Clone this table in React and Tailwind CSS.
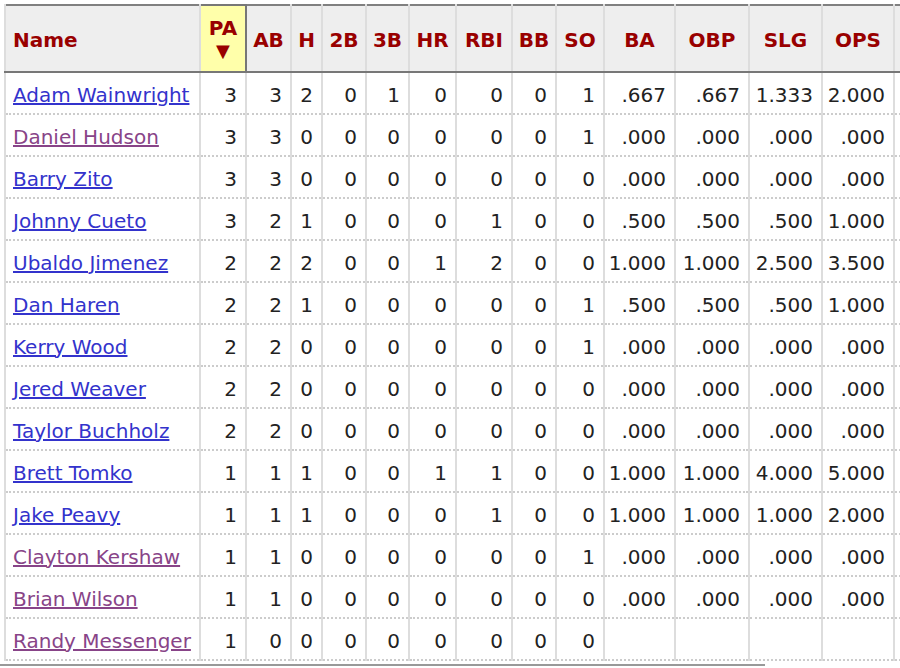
const COLS = [
  { key: 'name', label: 'Name', w: 195 },
  { key: 'pa', label: 'PA', w: 46 },
  { key: 'ab', label: 'AB', w: 45 },
  { key: 'h', label: 'H', w: 31 },
  { key: 'b2', label: '2B', w: 44 },
  { key: 'b3', label: '3B', w: 43 },
  { key: 'hr', label: 'HR', w: 47 },
  { key: 'rbi', label: 'RBI', w: 56 },
  { key: 'bb', label: 'BB', w: 44 },
  { key: 'so', label: 'SO', w: 48 },
  { key: 'ba', label: 'BA', w: 71 },
  { key: 'obp', label: 'OBP', w: 74 },
  { key: 'slg', label: 'SLG', w: 73 },
  { key: 'ops', label: 'OPS', w: 72 },
  { key: 'x', label: '', w: 60 },
]

// name, visited, PA AB H 2B 3B HR RBI BB SO, BA OBP SLG OPS
const ROWS = [
  ['Adam Wainwright', false, 3, 3, 2, 0, 1, 0, 0, 0, 1, '.667', '.667', '1.333', '2.000'],
  ['Daniel Hudson', true, 3, 3, 0, 0, 0, 0, 0, 0, 1, '.000', '.000', '.000', '.000'],
  ['Barry Zito', false, 3, 3, 0, 0, 0, 0, 0, 0, 0, '.000', '.000', '.000', '.000'],
  ['Johnny Cueto', false, 3, 2, 1, 0, 0, 0, 1, 0, 0, '.500', '.500', '.500', '1.000'],
  ['Ubaldo Jimenez', false, 2, 2, 2, 0, 0, 1, 2, 0, 0, '1.000', '1.000', '2.500', '3.500'],
  ['Dan Haren', false, 2, 2, 1, 0, 0, 0, 0, 0, 1, '.500', '.500', '.500', '1.000'],
  ['Kerry Wood', false, 2, 2, 0, 0, 0, 0, 0, 0, 1, '.000', '.000', '.000', '.000'],
  ['Jered Weaver', false, 2, 2, 0, 0, 0, 0, 0, 0, 0, '.000', '.000', '.000', '.000'],
  ['Taylor Buchholz', false, 2, 2, 0, 0, 0, 0, 0, 0, 0, '.000', '.000', '.000', '.000'],
  ['Brett Tomko', false, 1, 1, 1, 0, 0, 1, 1, 0, 0, '1.000', '1.000', '4.000', '5.000'],
  ['Jake Peavy', false, 1, 1, 1, 0, 0, 0, 1, 0, 0, '1.000', '1.000', '1.000', '2.000'],
  ['Clayton Kershaw', true, 1, 1, 0, 0, 0, 0, 0, 0, 1, '.000', '.000', '.000', '.000'],
  ['Brian Wilson', true, 1, 1, 0, 0, 0, 0, 0, 0, 0, '.000', '.000', '.000', '.000'],
  ['Randy Messenger', true, 1, 0, 0, 0, 0, 0, 0, 0, 0, '', '', '', ''],
]

const cell = 'border-2 border-solid border-x-[#dddddd] border-t-[#cccccc] border-b-[#cccccc] [border-bottom-style:dotted] [border-top-style:dotted] text-[20px] p-0 whitespace-nowrap'

export default function App() {
  return (
    <div className="w-[900px] h-[668px] overflow-hidden bg-white pt-[4px] pl-[4px] relative" style={{ fontFamily: '"DejaVu Sans", Verdana, sans-serif' }}>
      <table className="table-fixed border-collapse w-[949px] border-t-2 border-l-2 border-[#808080]">
        <colgroup>
          {COLS.map((c) => (
            <col key={c.key} style={{ width: c.w }} />
          ))}
        </colgroup>
        <thead>
          <tr className="h-[67px] bg-[#eeeeee]">
            {COLS.map((c) =>
              c.key === 'pa' ? (
                <th key={c.key} className="bg-[#ffffaa] border-2 border-[#777] text-[20px] font-bold text-[#990000] leading-[24px] text-center p-0 align-middle">
                  <div>PA</div>
                  <div className="text-[18px] leading-[22px]">▼</div>
                </th>
              ) : (
                <th
                  key={c.key}
                  className={`border-b-2 border-b-[#777] border-x-2 border-x-[#dddddd] text-[20px] font-bold text-[#990000] p-0 pt-[2px] align-middle ${
                    c.key === 'name' ? 'text-left pl-[7px]' : 'text-center'
                  }`}
                >
                  {c.label}
                </th>
              )
            )}
          </tr>
        </thead>
        <tbody>
          {ROWS.map((r) => (
            <tr key={r[0]} className="h-[42px]">
              <td className={`${cell} pl-[7px] pt-[3px]`}>
                <a href="#" className={`underline ${r[1] ? 'text-[#884488]' : 'text-[#3333cc]'}`}>
                  {r[0]}
                </a>
              </td>
              {r.slice(2).map((v, i) => (
                <td key={i} className={`${cell} text-right pr-[8px] pt-[3px] text-[#222]`}>
                  {v}
                </td>
              ))}
              <td className={cell} />
            </tr>
          ))}
        </tbody>
      </table>
      <div className="absolute left-0 bottom-[2px] w-[765px] h-[2px] bg-[#999]" />
    </div>
  )
}
